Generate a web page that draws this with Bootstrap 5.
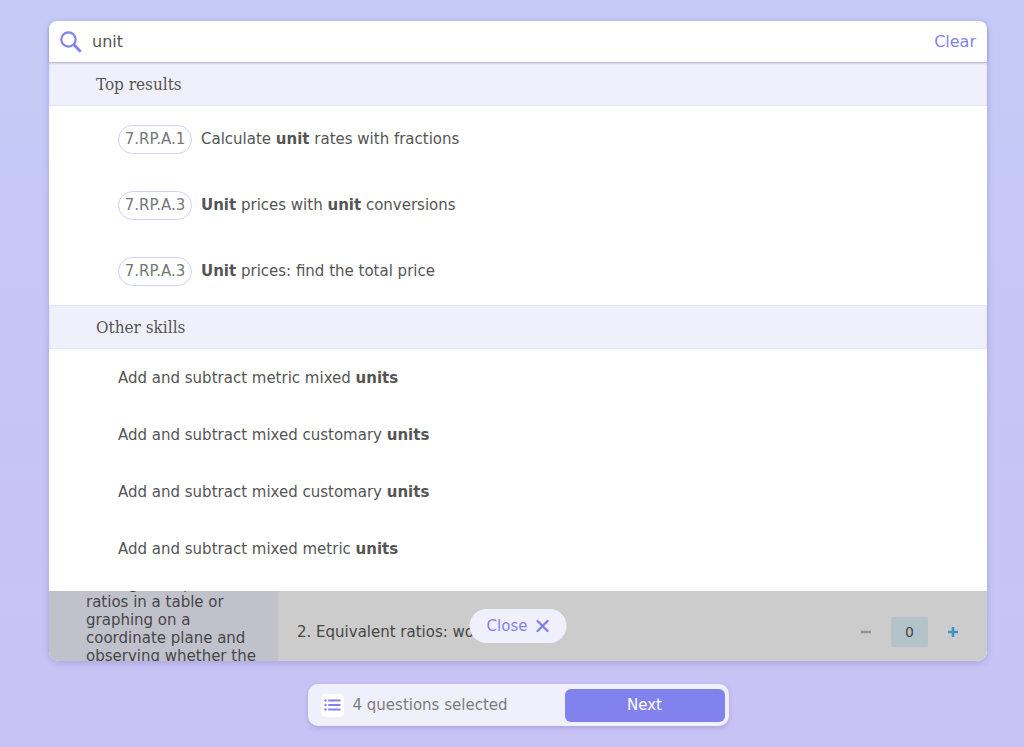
<!DOCTYPE html>
<html lang="en">
<head>
<meta charset="utf-8">
<meta name="viewport" content="width=device-width, initial-scale=1">
<title>Skill search</title>
<link href="https://cdn.jsdelivr.net/npm/bootstrap@5.3.0/dist/css/bootstrap.min.css" rel="stylesheet">
<style>
  :root { --violet: #8282ee; --lavender: #f0f0fd; --ink: #555; }
  body {
    min-height: 100vh; margin: 0; color: var(--ink);
    font-family: Verdana, "DejaVu Sans", sans-serif; font-size: 15px; line-height: 20px;
    background: linear-gradient(#c4cbf6, #c6c5f6 50%, #c9c3f5);
  }
  .page { padding: 21px 37px 21px 49px; gap: 23px; }
  .panel { border-radius: 10px; box-shadow: 0 2px 6px rgba(80, 70, 160, .25); }
  .search-bar { height: 41px; padding: 0 11px; gap: 10px; box-shadow: 0 1px 3px rgba(80, 80, 130, .4); z-index: 1; }
  .search-bar input { color: var(--ink); outline: 0; font-size: 16px; }
  .text-link { color: var(--violet); font-size: 16px; }
  .group-title {
    margin: 0; padding: 0 46px; height: 44px; line-height: 42px; color: #555;
    font-family: "Roboto Slab", "DejaVu Serif Condensed", "DejaVu Serif", serif; font-size: 17px; font-weight: 400;
    background: var(--lavender); border: 1px solid #e4e4fa;
  }
  .results a { color: var(--ink); padding: 0 69px; }
  .results a:hover { background: #f8f8fe; }
  .top-skills { padding-bottom: 1px; }
  .top-skills a { height: 66px; gap: 9px; }
  .other-skills a { height: 57px; }
  .other-skills { padding-bottom: 14px; }
  .standard { width: 74px; height: 29px; border: 1px solid #cfcffa; border-radius: 15px; color: #777; }
  .behind { height: 70px; background: #ccc; color: #474747; border-radius: 0 0 10px 10px; }
  .standard-text { width: 229px; padding: 0 20px 0 37px; background: #c1c1cc; line-height: 18px; }
  .standard-text p { margin: -16px 0 0; }
  .skill-line { padding: 12px 28px 0 19px; }
  .counter { gap: 19px; }
  .counter input { width: 37px; height: 30px; border: 0; border-radius: 2px; background: #b4c2ca; color: #444; font-size: 14px; }
  .close-pill { top: 18px; height: 34px; padding: 0 17px; gap: 8px; border-radius: 17px; background: var(--lavender); color: var(--violet); }
  .tray { width: 421px; max-width: 100%; height: 42px; padding: 4px; border-radius: 10px; background: var(--lavender); box-shadow: 0 2px 5px rgba(80, 70, 160, .25); color: #7c7c7c; }
  .list-btn { width: 23px; height: 23px; margin: 0 9px; border-radius: 5px; }
  .next-btn { width: 160px; height: 33px; border-radius: 6px; background: var(--violet); color: #fff; }
</style>
</head>
<body>
<main class="page d-flex flex-column">
  <section class="panel bg-white d-flex flex-column">
    <form class="search-bar d-flex align-items-center position-relative bg-white rounded-top-3" role="search">
      <label for="q" class="d-flex" aria-label="Search skills">
        <svg width="22" height="22" viewBox="0 0 22 22" fill="none" stroke="#8282ee" aria-hidden="true"><circle cx="8.500" cy="8.500" r="7.200" stroke-width="2.200"/><path d="M13.600 13.600L20.700 20.700" stroke-width="2.800"/></svg>
      </label>
      <input id="q" class="border-0 bg-transparent p-0 flex-grow-1" type="text" value="unit">
      <button type="reset" class="text-link border-0 bg-transparent p-0">Clear</button>
    </form>
    <div class="results">
      <h2 class="group-title">Top results</h2>
      <nav class="top-skills" aria-label="Top results">
        <a href="#" class="d-flex align-items-center text-decoration-none"><span class="standard d-flex align-items-center justify-content-center">7.RP.A.1</span><span>Calculate <b>unit</b> rates with fractions</span></a>
        <a href="#" class="d-flex align-items-center text-decoration-none"><span class="standard d-flex align-items-center justify-content-center">7.RP.A.3</span><span><b>Unit</b> prices with <b>unit</b> conversions</span></a>
        <a href="#" class="d-flex align-items-center text-decoration-none"><span class="standard d-flex align-items-center justify-content-center">7.RP.A.3</span><span><b>Unit</b> prices: find the total price</span></a>
      </nav>
      <h2 class="group-title">Other skills</h2>
      <nav class="other-skills" aria-label="Other skills">
        <a href="#" class="d-flex align-items-center text-decoration-none"><span>Add and subtract metric mixed <b>units</b></span></a>
        <a href="#" class="d-flex align-items-center text-decoration-none"><span>Add and subtract mixed customary <b>units</b></span></a>
        <a href="#" class="d-flex align-items-center text-decoration-none"><span>Add and subtract mixed customary <b>units</b></span></a>
        <a href="#" class="d-flex align-items-center text-decoration-none"><span>Add and subtract mixed metric <b>units</b></span></a>
      </nav>
    </div>
    <div class="behind d-flex position-relative overflow-hidden">
      <div class="standard-text flex-shrink-0"><p>testing for equivalent ratios in a table or graphing on a coordinate plane and observing whether the</p></div>
      <div class="skill-line d-flex flex-grow-1 align-items-center justify-content-between">
        <span>2. Equivalent ratios: word problems</span>
        <div class="counter d-flex align-items-center">
          <button type="button" class="border-0 bg-transparent p-0 d-flex" aria-label="Remove one"><svg width="12" height="12" viewBox="0 0 12 12" stroke="#929292" stroke-width="2.600"><path d="M1 6H11"/></svg></button>
          <input class="text-center p-0" type="text" value="0" aria-label="Number of questions">
          <button type="button" class="border-0 bg-transparent p-0 d-flex" aria-label="Add one"><svg width="12" height="12" viewBox="0 0 12 12" stroke="#3b93cb" stroke-width="2.600"><path d="M1 6H11M6 1V11"/></svg></button>
        </div>
      </div>
      <button type="button" class="close-pill border-0 position-absolute start-50 translate-middle-x d-flex align-items-center">Close
        <svg width="14" height="14" viewBox="0 0 14 14" stroke="#8282ee" stroke-width="2.400" stroke-linecap="round" aria-hidden="true"><path d="M2 2L12 12M12 2L2 12"/></svg>
      </button>
    </div>
  </section>
  <footer class="tray d-flex align-items-center align-self-center">
    <button type="button" class="list-btn border-0 bg-white p-0 d-flex align-items-center justify-content-center" aria-label="Show selected questions"><svg width="17" height="12" viewBox="0 0 17 12" fill="#8282ee"><circle cx="1.500" cy="1.500" r="1.200"/><circle cx="1.500" cy="6" r="1.200"/><circle cx="1.500" cy="10.500" r="1.200"/><path d="M4.200 .5H16.500V2.500H4.200ZM4.200 5H16.500V7H4.200ZM4.200 9.500H16.500V11.500H4.200Z"/></svg></button>
    <span class="flex-grow-1">4 questions selected</span>
    <button type="button" class="next-btn border-0 p-0">Next</button>
  </footer>
</main>
<script src="https://cdn.jsdelivr.net/npm/bootstrap@5.3.0/dist/js/bootstrap.bundle.min.js"></script>
</body>
</html>
